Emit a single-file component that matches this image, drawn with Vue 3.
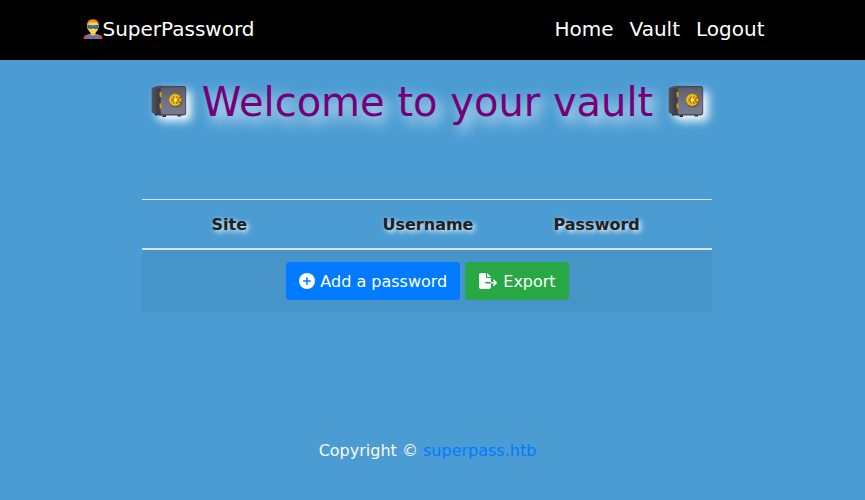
<script setup>
const links = ['Home', 'Vault', 'Logout']
const columns = ['Site', 'Username', 'Password']
</script>

<template>
  <div class="page">
    <nav class="navbar">
      <div class="container nav-inner">
        <a class="brand">
          <svg class="hero" viewBox="0 0 20 20">
            <path d="M3.800 8C3.400 3 5.600.2 9.800.2S16.400 3 15.900 8L14.500 11H5Z" fill="#f28a2d" />
            <path d="M.5 20C.5 17 2 15.900 5 15.400L8 14.500h4l3 .9c3 .5 4.500 1.600 4.500 4.600Z" fill="#d9415e" />
            <path d="M4.500 15.600 8 14.800h4l3.500.8V20h-11Z" fill="#4a83bd" />
            <path d="M7.500 11h5v4.400L10 17 7.500 15.400Z" fill="#f6bf45" />
            <path d="M4.600 7C4.600 3.800 7 3.200 10 3.200s5.400.6 5.400 3.800c0 4-2 7.200-5.400 7.200S4.600 11 4.600 7Z" fill="#ffd04a" />
            <path d="M4.200 6.200C6.500 5.800 8.500 6 10 6.500c1.500-.5 3.500-.7 5.800-.3 0 2.500-1.200 3.900-3 3.900-1.200 0-2-.5-2.800-1.100-.8.600-1.600 1.100-2.800 1.100-2 0-3-1.600-3-3.900Z" fill="#236b98" />
            <path d="M6.200 7.800h2.200M11.600 7.800h2.200" stroke="#6795a0" stroke-width=".8" />
            <path d="m7.800 17.500 2.200-.5 2.200.5-2.200 2.200Z" fill="#df3550" />
          </svg>SuperPassword</a>
        <div class="links">
          <a v-for="link in links" :key="link">{{ link }}</a>
        </div>
      </div>
    </nav>

    <svg class="defs" width="0" height="0" aria-hidden="true">
      <defs>
        <linearGradient id="steel" x1="0" y1="0" x2="0" y2="1">
          <stop offset="0" stop-color="#5b5c6a" />
          <stop offset=".55" stop-color="#717386" />
          <stop offset="1" stop-color="#77798d" />
        </linearGradient>
        <linearGradient id="side" x1="0" y1="0" x2="1" y2="0">
          <stop offset="0" stop-color="#54555f" />
          <stop offset="1" stop-color="#30313a" />
        </linearGradient>
        <symbol id="safe" viewBox="0 0 36 34">
          <path d="M11.500 30h3.500v2h-3.500ZM26.500 29.500H30v2h-3.500ZM3.500 28.500H7v2H4Z" fill="#292a32" />
          <path d="M.6 4.500Q.6 2.500 2.500 2.200L9 .8l2 29.600-2 .4-6.800-2.500Q.6 28 .6 26Z" fill="url(#side)" />
          <path d="M2.500 2.300 8 .7 33 .9q1.500.2 1.500 1.600L9 3.500Z" fill="#50515d" />
          <rect x="8.600" y="1.300" width="26.600" height="29.200" rx="3" fill="#42434f" />
          <rect x="9.800" y="2.300" width="24.700" height="27" rx="2.200" fill="url(#steel)" />
          <path d="M8.600 7h2v5h-2ZM8.600 18.500h2v5h-2Z" fill="#d49a10" />
          <circle cx="24.700" cy="15.700" r="6.800" fill="#4d4e5d" />
          <circle cx="24.400" cy="15" r="6.500" fill="#b88308" />
          <circle cx="24.100" cy="14.800" r="5.900" fill="#f0bd19" />
          <circle cx="24.300" cy="15" r="4" fill="#b9800b" />
          <path d="m20 12 8.500 6m0-6.500-8 7M24.300 10v10" stroke="#efc022" stroke-width="1.500" />
          <path d="m22 13.500 1 .7m3 2.800-1 .7m-3-.7.800-.5" stroke="#80500b" stroke-width="1.200" />
          <circle cx="24.300" cy="15" r="1.700" fill="#fff07a" />
          <path d="m27.500 13.500 3-2M27.500 16.500l3 2" stroke="#8c6010" stroke-width="1.300" />
        </symbol>
      </defs>
    </svg>

    <main class="container">
      <h1>
        <svg class="safe"><use href="#safe" /></svg>
        <span>Welcome to your vault</span>
        <svg class="safe"><use href="#safe" /></svg>
      </h1>
      <table>
        <thead>
          <tr>
            <th class="narrow"></th>
            <th v-for="column in columns" :key="column">{{ column }}</th>
          </tr>
        </thead>
        <tbody>
          <tr>
            <td colspan="4">
              <div class="actions">
                <button class="add">
                  <svg class="plus" viewBox="0 0 16 16">
                    <circle cx="8" cy="8" r="8" fill="#fff" />
                    <path d="M8 4.700v6.600M4.700 8h6.600" stroke="#007bff" stroke-width="1.500" stroke-linecap="round" />
                  </svg>
                  <span>Add a password</span>
                </button>
                <button class="export">
                  <svg class="file" viewBox="0 0 576 512">
                    <path fill="#fff" d="M0 64C0 28.700 28.700 0 64 0h160v128c0 17.700 14.300 32 32 32h128v128H216c-13.300 0-24 10.700-24 24s10.700 24 24 24h168v112c0 35.300-28.700 64-64 64H64c-35.300 0-64-28.700-64-64ZM384 336v-48h110.100l-39-39c-9.400-9.400-9.400-24.600 0-33.900s24.600-9.400 33.900 0l80 80c9.400 9.400 9.400 24.600 0 33.900l-80 80c-9.400 9.400-24.600 9.400-33.900 0s-9.400-24.600 0-33.900l39-39ZM384 128H256V0Z" />
                  </svg>
                  <span>Export</span>
                </button>
              </div>
            </td>
          </tr>
        </tbody>
      </table>
    </main>

    <footer>Copyright © <a>superpass.htb</a></footer>
  </div>
</template>

<style>
body {
  background: #4b9cd3;
}
</style>

<style scoped>
* {
  box-sizing: border-box;
}
.page {
  height: 500px;
  display: flex;
  flex-direction: column;
  font: 16px/24px "DejaVu Sans", sans-serif;
  color: #212529;
}
.navbar {
  height: 60px;
  flex: none;
  padding-right: 10px;
  background: #000;
}
.container {
  width: 720px;
  margin: 0 auto;
  padding: 0 15px;
}
.nav-inner {
  height: 60px;
  display: flex;
  align-items: center;
  justify-content: space-between;
  font-size: 20px;
  line-height: 30px;
  color: #fff;
  padding-bottom: 2px;
}
.brand {
  display: flex;
  align-items: center;
}
.hero {
  width: 20px;
  height: 20px;
}
.links {
  display: flex;
}
.links a {
  padding: 0 8px;
}
.defs {
  display: block;
  flex: none;
}
main.container {
  flex: none;
  margin-left: 67px;
}
h1 {
  margin: 18px 0 73px;
  height: 48px;
  display: flex;
  justify-content: center;
  align-items: center;
  gap: 15px;
  padding-left: 1px;
  font-size: 40px;
  font-weight: 400;
  line-height: 48px;
  color: #760078;
  white-space: nowrap;
  text-shadow: 5px 6px 14px #fff;
}
.safe {
  width: 36px;
  height: 34px;
  flex: none;
  filter: drop-shadow(5px 5px 5px #fff);
}
table {
  width: 570px;
  margin: 0 auto;
  border-spacing: 0;
  table-layout: fixed;
}
th {
  width: 30%;
  height: 51px;
  padding: 13px 12px 11px 12.5px;
  border-top: 1px solid #dee2e6;
  border-bottom: 2px solid #dee2e6;
  text-align: left;
  color: #212121;
  text-shadow: 2px 2px 5px #fff;
}
th.narrow {
  width: 10%;
}
td {
  padding: 12px;
  background: rgba(0, 0, 0, 0.05);
}
.actions {
  display: flex;
  justify-content: center;
  gap: 5px;
  padding-left: 1px;
}
button {
  height: 38px;
  display: flex;
  align-items: center;
  gap: 5px;
  padding: 6px 13px;
  border: 0;
  border-radius: 4px;
  font: inherit;
  color: #fff;
  white-space: nowrap;
}
button span {
  padding-top: 2px;
}
.add {
  background: #007bff;
}
.export {
  background: #28a745;
}
.plus {
  width: 16px;
  height: 16px;
}
.file {
  width: 18px;
  height: 16px;
  margin: 0 1px;
}
footer {
  margin-top: auto;
  padding: 0 10px 37px 0;
  text-align: center;
  color: #f8f9fa;
}
footer a {
  color: #007bff;
}
</style>
